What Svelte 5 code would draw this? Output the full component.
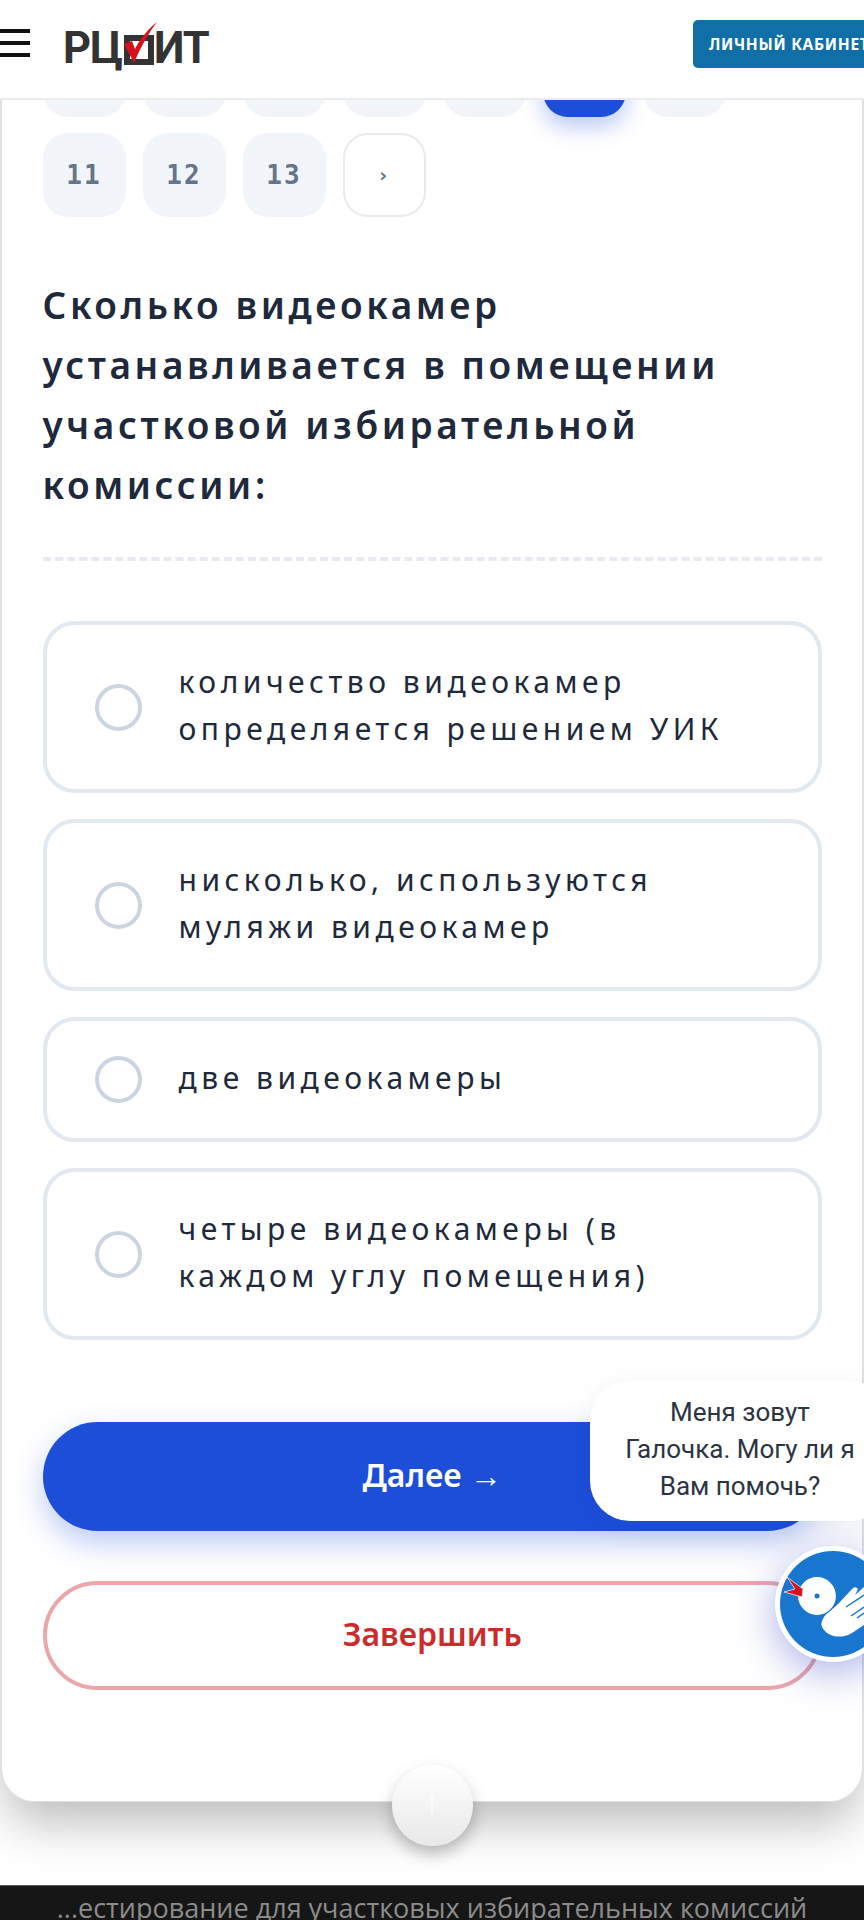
<script lang="ts">
  // страница теста: вопрос 10 из 13
  const firstRow = ['', '', '', '', '', '', '']
  const pages = ['11', '12', '13']

  const question = 'Сколько видеокамер устанавливается в помещении участковой избирательной комиссии:'

  const answers = [
    'количество видеокамер определяется решением УИК',
    'нисколько, используются муляжи видеокамер',
    'две видеокамеры',
    'четыре видеокамеры (в каждом углу помещения)'
  ]
</script>

<div class="page">
  <header class="topbar">
    <button class="burger" aria-label="Меню"><i></i><i></i><i></i></button>
    <div class="logo">
      <span>РЦ</span>
      <span class="logo-box"></span>
      <span>ИТ</span>
      <svg class="logo-check" viewBox="0 0 33 41" aria-hidden="true">
        <path d="M0 22 L8 19 L11 27 C16 17 24 7 33 0 C26 9 17 24 10 41 Z" fill="#d8121d" />
      </svg>
    </div>
    <button class="cabinet">Личный кабинет</button>
  </header>

  <main class="content">
    <section class="card">
      <nav class="pager">
        {#each firstRow as label, i}
          <span class="page-num" class:active={i === 5}>{label}</span>
        {/each}
        {#each pages as label}
          <span class="page-num">{label}</span>
        {/each}
        <span class="page-num next">›</span>
      </nav>

      <h2 class="question">{question}</h2>
      <div class="divider"></div>

      <div class="answers">
        {#each answers as answer}
          <label class="answer">
            <span class="radio"></span>
            <span class="answer-text">{answer}</span>
          </label>
        {/each}
      </div>

      <div class="actions">
        <button class="btn btn-next">Далее →</button>
        <button class="btn btn-finish">Завершить</button>
      </div>

      <button class="to-top" aria-label="Наверх">
        <svg width="8" height="24" viewBox="0 0 8 24" aria-hidden="true">
          <path d="M4 24 V1 M2 5 L4 1 L6 5" fill="none" stroke="#fff" stroke-width="1" />
        </svg>
      </button>
    </section>
  </main>

  <footer class="tab-title">...естирование для участковых избирательных комиссий</footer>

  <!-- виджет-помощник -->
  <div class="bubble">Меня зовут Галочка. Могу ли я Вам помочь?</div>
  <div class="helper">
    <svg viewBox="0 0 106 106" width="106" height="106" aria-hidden="true">
      <circle cx="53" cy="53" r="53" fill="#1976cf" />
      <path d="M42 70 C46 60 54 58 59 52 L73 37 Q76 35 78 38 L75 44 L84 36 V74 L72 82 C62 88 50 86 45 80 Q40 75 42 70 Z" fill="#fff" />
      <path d="M66 56 L84 44 M71 65 L84 56 M77 67 L84 62" stroke="#1976cf" stroke-width="1.5" fill="none" />
      <circle cx="37" cy="45" r="19.5" fill="#fff" stroke="#1976cf" stroke-width="1.2" />
      <circle cx="37" cy="45" r="2.5" fill="#1976cf" />
      <path d="M7 26 L23 38 L22 46 L4 41 L15 38 Z" fill="#d8121d" stroke="#e8eaf2" stroke-width="0.8" />
    </svg>
  </div>
</div>

<style>
  :global(body) {
    margin: 0;
    background: #fff;
  }

  .page {
    position: relative;
    width: 864px;
    height: 1920px;
    overflow: hidden;
    display: flex;
    flex-direction: column;
    background: #fff;
    font-family: 'Noto Sans', 'Open Sans', sans-serif;
    color: #1e293b;
  }

  /* шапка */
  .topbar {
    position: relative;
    z-index: 2;
    flex: none;
    height: 100px;
    box-sizing: border-box;
    display: flex;
    align-items: flex-start;
    background: #fff;
    border-bottom: 2px solid #e9ebee;
  }

  .burger {
    display: flex;
    flex-direction: column;
    gap: 8.5px;
    margin: 29px 0 0;
    padding: 0;
    width: 30px;
    border: none;
    background: none;
  }

  .burger i {
    display: block;
    height: 3.5px;
    background: #111;
  }

  .logo {
    position: relative;
    display: flex;
    align-items: center;
    margin: 27px 0 0 33px;
    height: 44px;
    font: 700 43.5px/44px 'Roboto', 'Noto Sans', sans-serif;
    letter-spacing: -1px;
    color: #333;
  }

  .logo-box {
    box-sizing: border-box;
    width: 30px;
    height: 30px;
    margin: 1px 0 0 2px;
    border: 6px solid #333;
  }

  .logo-check {
    position: absolute;
    left: 61px;
    top: -5px;
    width: 33px;
    height: 41px;
  }

  .cabinet {
    flex: none;
    margin: 20px -15px 0 auto;
    width: 186px;
    height: 48px;
    padding: 0 0 0 16px;
    border: none;
    border-radius: 5px;
    background: #0f6fa6;
    color: #fff;
    font: 700 15.5px/48px 'Noto Sans', sans-serif;
    letter-spacing: 0.7px;
    text-align: left;
    text-transform: uppercase;
    white-space: nowrap;
    overflow: hidden;
  }

  /* карточка теста */
  .content {
    flex: none;
    height: 1785px;
  }

  .card {
    position: relative;
    box-sizing: border-box;
    height: 1769px;
    margin-top: -67px;
    padding: 0 40px 0 40.5px;
    background: #fff;
    border: solid #dfe1e4;
    border-width: 0 2.5px 1px;
    border-radius: 0 0 34px 34px;
    box-shadow: 0 25px 50px -6px rgba(0, 0, 0, 0.28);
  }

  .pager {
    display: flex;
    flex-wrap: wrap;
    gap: 16px 17px;
  }

  .page-num {
    box-sizing: border-box;
    width: 83px;
    height: 84px;
    display: flex;
    align-items: center;
    justify-content: center;
    border-radius: 25px;
    background: #f1f5f9;
    color: #64748b;
    font: 700 26px/1 'DejaVu Sans Mono', monospace;
    letter-spacing: 2px;
  }

  .page-num.active {
    background: #1d4ed8;
    box-shadow: 0 10px 22px rgba(29, 78, 216, 0.3);
  }

  .page-num.next {
    background: #fff;
    border: 2px solid #e8eaed;
    font-size: 20px;
  }

  .question {
    margin: 58px 0 0;
    font: 600 37px/60px 'Noto Sans', sans-serif;
    letter-spacing: 3.6px;
    color: #1e293b;
  }

  .divider {
    margin-top: 42px;
    border-top: 4px dashed #e7ebf0;
  }

  .answers {
    display: flex;
    flex-direction: column;
    gap: 26px;
    margin-top: 60px;
  }

  .answer {
    box-sizing: border-box;
    display: flex;
    align-items: center;
    gap: 37px;
    padding: 35px 60px 35px 48px;
    border: 4px solid #e2e8f0;
    border-radius: 32px;
  }

  .radio {
    flex: none;
    box-sizing: border-box;
    width: 47px;
    height: 47px;
    border: 4px solid #cbd5e1;
    border-radius: 50%;
  }

  .answer-text {
    margin: -2px 0 2px;
    font: 400 30px/47px 'Noto Sans', sans-serif;
    letter-spacing: 4.5px;
    color: #1e293b;
  }

  .actions {
    display: flex;
    flex-direction: column;
    gap: 50px;
    margin-top: 82px;
  }

  .btn {
    height: 109px;
    padding: 0 0 4px;
    border-radius: 55px;
    font: 600 32px/1 'Noto Sans', sans-serif;
    text-align: center;
  }

  .btn-next {
    border: none;
    background: #1d4ed8;
    color: #fff;
    box-shadow: 0 12px 30px rgba(29, 78, 216, 0.3);
  }

  .btn-finish {
    background: #fff;
    border: 4px solid #eca6aa;
    color: #cc2b2b;
  }

  .to-top {
    position: absolute;
    left: 389.5px;
    bottom: -45px;
    width: 81px;
    height: 81px;
    padding: 0;
    display: flex;
    align-items: center;
    justify-content: center;
    border: none;
    border-radius: 50%;
    background: linear-gradient(180deg, #fff 0%, #e8e8e8 100%);
    box-shadow: 0 8px 16px rgba(0, 0, 0, 0.25);
  }

  .tab-title {
    flex: none;
    height: 35px;
    box-sizing: border-box;
    overflow: hidden;
    background: #161616;
    border-top: 1px solid #555;
    color: #8c8c8c;
    font: 400 27px/44px 'Open Sans', 'Noto Sans', sans-serif;
    text-align: center;
    white-space: nowrap;
  }

  /* помощник поверх страницы */
  .bubble {
    position: absolute;
    left: 590px;
    top: 1381px;
    box-sizing: border-box;
    width: 300px;
    height: 140px;
    padding: 13px 30px 0;
    background: #fff;
    border-radius: 40px;
    color: #2b3442;
    font: 400 26px/37px 'Roboto', sans-serif;
    text-align: center;
    box-shadow: 0 8px 30px rgba(30, 50, 120, 0.08);
  }

  .helper {
    position: absolute;
    left: 775px;
    top: 1546px;
    box-sizing: border-box;
    width: 116px;
    height: 116px;
    padding: 5px;
    background: #fff;
    border-radius: 50%;
    box-shadow: 0 10px 40px rgba(40, 60, 190, 0.4);
  }

  .helper svg {
    display: block;
  }
</style>
